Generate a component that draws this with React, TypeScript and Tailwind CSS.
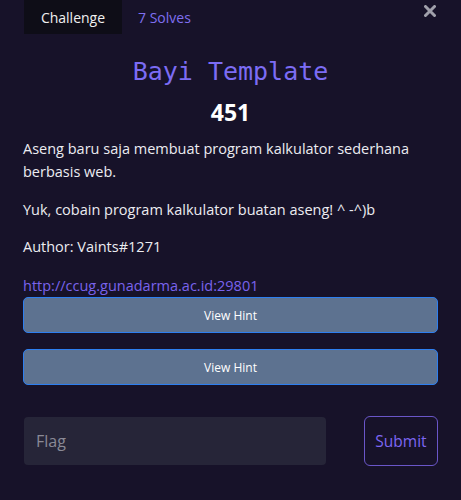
import React from "react";

export default function App() {
  return (
    <div
      className="w-[461px] h-[500px] bg-[#171229] text-[#ececf1] overflow-hidden"
      style={{ fontFamily: '"Open Sans", "Noto Sans", sans-serif' }}
    >
      <div className="flex items-start h-[34px] pl-[24px] pr-[24px]">
        <div className="w-[98px] h-[34px] bg-[#0e0d17] flex items-center justify-center text-[14px] text-[#f0f0f0]">
          Challenge
        </div>
        <div className="h-[34px] flex items-center pl-[16px] text-[14px] text-[#7f6ff0]">
          7 Solves
        </div>
        <div className="ml-auto pt-[5px] pr-[1px]">
          <svg width="12" height="12" viewBox="0 0 12 12">
            <path d="M1.5 1.5 L10.5 10.5 M10.5 1.5 L1.5 10.5" stroke="#a0a0ab" strokeWidth="3" strokeLinecap="round" />
          </svg>
        </div>
      </div>
      <div
        className="text-center text-[25px] leading-[30px] text-[#7c6cf4] mt-[23px]"
        style={{ fontFamily: '"DejaVu Sans Mono", "Liberation Mono", monospace' }}
      >
        Bayi Template
      </div>
      <div className="text-center text-[23px] leading-[30px] font-bold text-white mt-[10px]">451</div>
      <div className="px-[23px] mt-[10px] text-[14.5px] leading-[23px]">
        <p>Aseng baru saja membuat program kalkulator sederhana berbasis web.</p>
        <p className="mt-[15px]">Yuk, cobain program kalkulator buatan aseng! ^ -^)b</p>
        <p className="mt-[14px]">Author: Vaints#1271</p>
        <p className="mt-[16px] text-[#7a63ec]">http://ccug.gunadarma.ac.id:29801</p>
        <button className="mt-[0px] w-[415px] h-[36px] rounded-[5px] bg-[#5d7290] border border-[#2d7ff0] text-[12px] text-white flex items-center justify-center">
          View Hint
        </button>
        <button className="mt-[16px] w-[415px] h-[36px] rounded-[5px] bg-[#5d7290] border border-[#2d7ff0] text-[12px] text-white flex items-center justify-center">
          View Hint
        </button>
        <div className="flex items-center mt-[31px]">
          <div className="ml-[1px] w-[302px] h-[48px] rounded-[4px] bg-[#262538] flex items-center pl-[12px] text-[16px] text-[#8a8a96]">
            Flag
          </div>
          <button className="ml-auto w-[74px] h-[50px] rounded-[6px] border-[1.5px] border-[#6a56c8] text-[15.5px] text-[#7d66f2] flex items-center justify-center">
            Submit
          </button>
        </div>
      </div>
    </div>
  );
}
